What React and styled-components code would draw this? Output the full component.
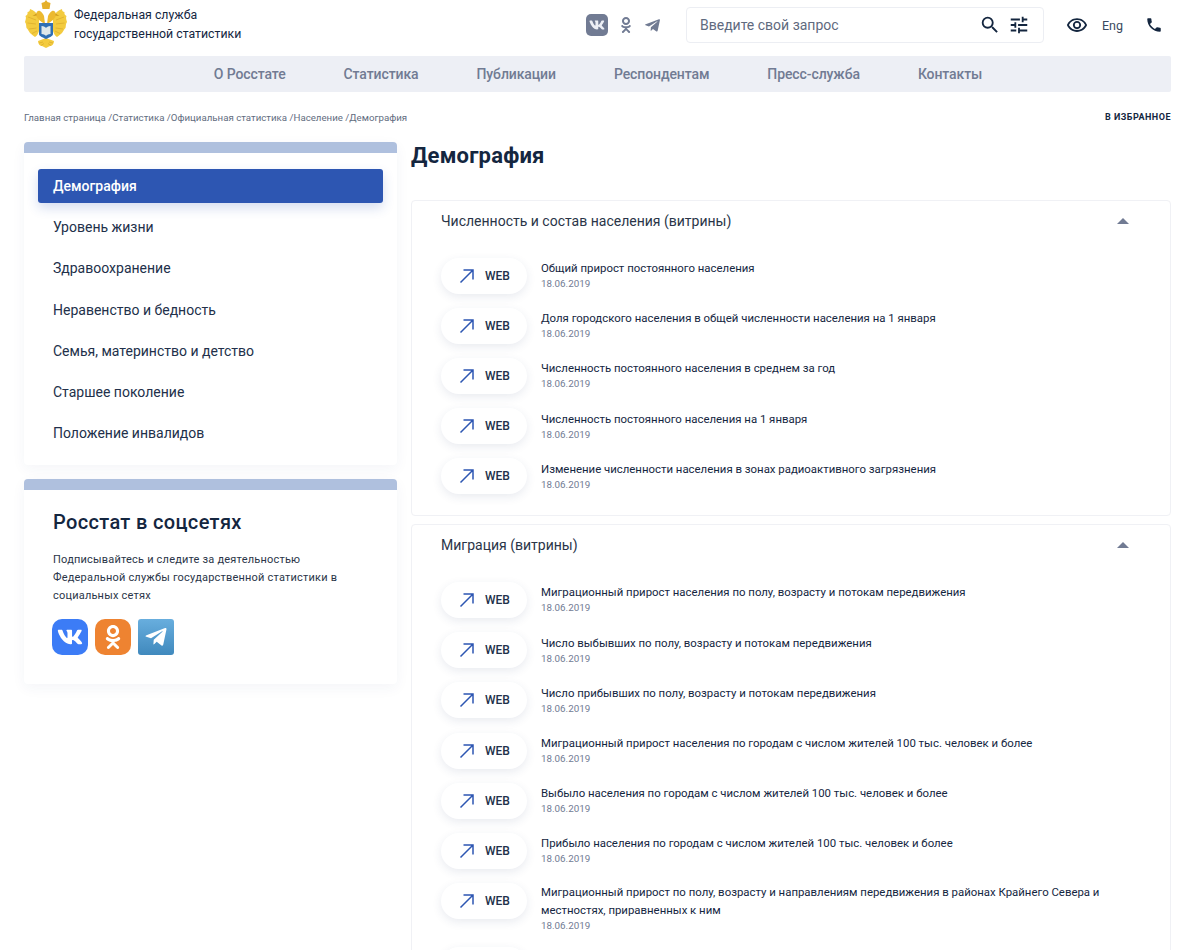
import styled, { createGlobalStyle } from 'styled-components';
import { FaVk, FaOdnoklassniki, FaTelegramPlane } from 'react-icons/fa';
import { MdSearch, MdTune, MdOutlineRemoveRedEye, MdPhone } from 'react-icons/md';

const GlobalStyle = createGlobalStyle`
  html, body {
    margin: 0;
    height: 950px;
    overflow: hidden;
    background: #fff;
  }
  body {
    font-family: Roboto, "Liberation Sans", sans-serif;
    color: #14263f;
  }
  * { box-sizing: border-box; }
`;

const Page = styled.div`
  width: 1200px;
  padding: 0 29px 0 24px;
`;

const Header = styled.header`
  display: flex;
  align-items: center;
  height: 56px;
`;

const Brand = styled.div`
  display: flex;
  align-items: flex-start;
  align-self: flex-start;
  gap: 6px;
  width: 562px;
`;

const BrandText = styled.div`
  margin-top: 5.5px;
  font-size: 12.3px;
  line-height: 19.5px;
  color: #14263f;
`;

const SmallSocials = styled.div`
  display: flex;
  align-items: center;
  gap: 10px;
  width: 100px;
  margin-top: -6px;
  color: #717b93;
`;

const VkBadge = styled.span`
  display: flex;
  align-items: center;
  justify-content: center;
  width: 22px;
  height: 22px;
  border-radius: 5px;
  background: #717b93;
  color: #edeff5;
  font-size: 16px;
`;

const SearchBox = styled.div`
  display: flex;
  align-items: center;
  width: 358px;
  height: 36px;
  margin-top: -6px;
  padding: 0 13px;
  border: 1px solid #eceef3;
  border-radius: 4px;
  color: #14263f;
`;

const SearchText = styled.span`
  flex: 1;
  font-size: 14px;
  color: #5f6a7e;
`;

const TuneIcon = styled(MdTune)`
  margin-left: 7px;
`;

const HeaderTools = styled.div`
  display: flex;
  align-items: center;
  margin-left: 22px;
  margin-top: -6px;
  color: #14263f;
`;

const Lang = styled.span`
  margin: 0 22px 0 14px;
  font-size: 12.5px;
  color: #3a4960;
`;

const Nav = styled.nav`
  display: flex;
  justify-content: center;
  align-items: center;
  gap: 58px;
  height: 36px;
  padding-left: 1px;
  border-radius: 2px;
  background: #edeff5;
`;

const NavLink = styled.a`
  font-size: 14px;
  font-weight: 500;
  letter-spacing: -0.1px;
  color: #717b93;
`;

const Crumbs = styled.div`
  display: flex;
  justify-content: space-between;
  align-items: center;
  height: 14px;
  margin-top: 18px;
  font-size: 9.7px;
  color: #5f6c80;
`;

const Favorite = styled.span`
  font-size: 9px;
  font-weight: 700;
  letter-spacing: 0.5px;
  color: #14263f;
`;

const Columns = styled.div`
  display: grid;
  grid-template-columns: 373px 760px;
  gap: 14px;
  margin-top: 18px;
`;

const Sidebar = styled.aside`
  display: flex;
  flex-direction: column;
  gap: 14px;
`;

const SideCard = styled.section`
  border-top: 11px solid #afc0de;
  border-radius: 4px;
  background: #fff;
  box-shadow: 0 4px 14px rgba(40, 60, 110, 0.05);
`;

const Menu = styled.div`
  padding: 16px 14px 8px;
`;

const MenuItem = styled.div`
  display: flex;
  align-items: center;
  height: 34px;
  margin-bottom: 7.2px;
  padding-left: 15px;
  border-radius: 3px;
  font-size: 14px;
  font-weight: ${(props) => (props.$active ? 500 : 400)};
  color: ${(props) => (props.$active ? '#fff' : '#22304a')};
  background: ${(props) => (props.$active ? '#2d56b2' : 'transparent')};
  box-shadow: ${(props) => (props.$active ? '0 5px 12px rgba(45, 86, 178, 0.2)' : 'none')};
`;

const SocialBody = styled.div`
  padding: 19px 29px 29px;
`;

const SocialTitle = styled.h3`
  margin: 0;
  font-size: 20px;
  line-height: 26px;
  font-weight: 500;
  letter-spacing: 0.35px;
  color: #14263f;
`;

const SocialText = styled.p`
  margin: 16px 0 14px;
  font-size: 11px;
  line-height: 18px;
  letter-spacing: 0.2px;
  color: #2a3548;
`;

const SocialRow = styled.div`
  display: flex;
  gap: 7px;
  margin-left: -1px;
`;

const SocialIcon = styled.span`
  display: flex;
  align-items: center;
  justify-content: center;
  width: 36px;
  height: 36px;
  border-radius: ${(props) => props.$radius || '10px'};
  background: ${(props) => props.$bg};
  color: #fff;
  font-size: ${(props) => props.$size || '24px'};
`;

const Main = styled.main`
  min-width: 0;
`;

const Title = styled.h1`
  margin: 0 0 30px;
  font-size: 22px;
  line-height: 28px;
  font-weight: 700;
  letter-spacing: 0.2px;
  color: #14263f;
`;

const Card = styled.section`
  margin-bottom: 8px;
  padding: 0 29px 7px;
  border: 1px solid #f0f1f5;
  border-radius: 4px;
`;

const CardHead = styled.div`
  display: flex;
  align-items: center;
  justify-content: space-between;
  height: 40px;
  margin-bottom: 16.5px;
  font-size: 14px;
  color: #2a3548;
`;

const Caret = styled.span`
  width: 0;
  height: 0;
  margin-right: 12px;
  border-left: 6px solid transparent;
  border-right: 6px solid transparent;
  border-bottom: 6px solid #717b93;
`;

const Row = styled.div`
  display: flex;
  align-items: flex-start;
  gap: 14px;
  min-height: 50.2px;
`;

const WebPill = styled.span`
  display: flex;
  flex: none;
  align-items: center;
  gap: 10px;
  width: 86px;
  height: 36px;
  padding-left: 18px;
  border-radius: 18px;
  background: #fff;
  box-shadow: 0 3px 10px rgba(40, 60, 110, 0.1);
  font-size: 12px;
  font-weight: 500;
  color: #22304a;
`;

const RowInfo = styled.div`
  margin: ${(props) => (props.$wrapped ? '-0.5px' : '1.5px')} 0 14px;
`;

const RowTitle = styled.div`
  font-size: 11.4px;
  line-height: 18px;
  color: #14263f;
`;

const RowDate = styled.div`
  font-size: 9.8px;
  line-height: 14px;
  color: #717b93;
`;

const Arrow = () => (
  <svg width="16" height="16" viewBox="0 0 16 16" fill="none" stroke="#2d56b2" strokeWidth="1.5">
    <path d="M1.5 14.5 14 2M4.5 2H14v9.5" />
  </svg>
);

const EmblemHalf = () => (
  <g>
    <path
      d="M15 18C13 13 10 10 6 9c0 2-1 3-2.500 3 .5 2-.5 3-2 4 1 2 0 4-.5 6 1.500 2 1 4 1.500 6 1.500 1 2 3 3.500 5 1.500 1 3 3 5 4 2-1 3-3 4-6z"
      fill="#f3cb3f"
    />
    <path d="M12 20 4 17M12 24 3.500 23M12.500 28 5 29M13 31 8 33.500" stroke="#d9a92b" strokeWidth="0.7" fill="none" />
    <path d="M21 24c-4-2-8-5-9-9 0-3 2-5 4-4 2 1 3 3 4 5z" fill="#ecb92f" />
    <path d="M12.500 13.500 8.500 16l4-.5z" fill="#c9951d" />
    <path d="M22 38l-8 3c0 3 2 5 4 5l4 2z" fill="#f3cb3f" />
    <path d="M15 43l4-1M17 45.500l3-2" stroke="#d9a92b" strokeWidth="0.7" fill="none" />
  </g>
);

const Emblem = () => (
  <svg width="44" height="48" viewBox="0 0 44 48">
    <EmblemHalf />
    <g transform="translate(44 0) scale(-1 1)">
      <EmblemHalf />
    </g>
    <path d="M22 0l1.500 2 3 1-1 6h-7l-1-6 3-1z" fill="#e5b02b" />
    <path d="M15 23h14v11c0 2-3.500 3.500-7 5-3.500-1.500-7-3-7-5z" fill="#2f6fb5" />
    <path d="M17.500 26c2.500 0 3.800 1 4.500 2 .7-1 2-2 4.500-2v8c-2.500 0-3.800 1-4.500 2-.7-1-2-2-4.500-2z" fill="#dfe8ea" />
  </svg>
);

const menu = [
  'Уровень жизни',
  'Здравоохранение',
  'Неравенство и бедность',
  'Семья, материнство и детство',
  'Старшее поколение',
  'Положение инвалидов',
];

const navItems = ['О Росстате', 'Статистика', 'Публикации', 'Респондентам', 'Пресс-служба', 'Контакты'];

const population = [
  'Общий прирост постоянного населения',
  'Доля городского населения в общей численности населения на 1 января',
  'Численность постоянного населения в среднем за год',
  'Численность постоянного населения на 1 января',
  'Изменение численности населения в зонах радиоактивного загрязнения',
];

const migration = [
  'Миграционный прирост населения по полу, возрасту и потокам передвижения',
  'Число выбывших по полу, возрасту и потокам передвижения',
  'Число прибывших по полу, возрасту и потокам передвижения',
  'Миграционный прирост населения по городам с числом жителей 100 тыс. человек и более',
  'Выбыло населения по городам с числом жителей 100 тыс. человек и более',
  'Прибыло населения по городам с числом жителей 100 тыс. человек и более',
  'Миграционный прирост по полу, возрасту и направлениям передвижения в районах Крайнего Севера и местностях, приравненных к ним',
];

const DataRow = ({ text }) => (
  <Row>
    <WebPill>
      <Arrow />
      WEB
    </WebPill>
    <RowInfo $wrapped={text.length > 100}>
      <RowTitle>{text}</RowTitle>
      <RowDate>18.06.2019</RowDate>
    </RowInfo>
  </Row>
);

const App = () => (
  <Page>
    <GlobalStyle />
    <Header>
      <Brand>
        <Emblem />
        <BrandText>
          Федеральная служба
          <br />
          государственной статистики
        </BrandText>
      </Brand>
      <SmallSocials>
        <VkBadge>
          <FaVk />
        </VkBadge>
        <FaOdnoklassniki size={16} />
        <FaTelegramPlane size={17} />
      </SmallSocials>
      <SearchBox>
        <SearchText>Введите свой запрос</SearchText>
        <MdSearch size={22} />
        <TuneIcon size={22} />
      </SearchBox>
      <HeaderTools>
        <MdOutlineRemoveRedEye size={22} />
        <Lang>Eng</Lang>
        <MdPhone size={18} />
      </HeaderTools>
    </Header>
    <Nav>
      {navItems.map((item) => (
        <NavLink key={item}>{item}</NavLink>
      ))}
    </Nav>
    <Crumbs>
      <span>Главная страница /Статистика /Официальная статистика /Население /Демография</span>
      <Favorite>В ИЗБРАННОЕ</Favorite>
    </Crumbs>
    <Columns>
      <Sidebar>
        <SideCard>
          <Menu>
            <MenuItem $active>Демография</MenuItem>
            {menu.map((item) => (
              <MenuItem key={item}>{item}</MenuItem>
            ))}
          </Menu>
        </SideCard>
        <SideCard>
          <SocialBody>
            <SocialTitle>Росстат в соцсетях</SocialTitle>
            <SocialText>
              Подписывайтесь и следите за деятельностью
              <br />
              Федеральной службы государственной статистики в
              <br />
              социальных сетях
            </SocialText>
            <SocialRow>
              <SocialIcon $bg="#3c7cf6" $size="26px">
                <FaVk />
              </SocialIcon>
              <SocialIcon $bg="#ee8331">
                <FaOdnoklassniki />
              </SocialIcon>
              <SocialIcon $bg="linear-gradient(#68aede, #4089bd)" $radius="3px">
                <FaTelegramPlane />
              </SocialIcon>
            </SocialRow>
          </SocialBody>
        </SideCard>
      </Sidebar>
      <Main>
        <Title>Демография</Title>
        <Card>
          <CardHead>
            Численность и состав населения (витрины)
            <Caret />
          </CardHead>
          {population.map((item) => (
            <DataRow key={item} text={item} />
          ))}
        </Card>
        <Card>
          <CardHead>
            Миграция (витрины)
            <Caret />
          </CardHead>
          {migration.map((item) => (
            <DataRow key={item} text={item} />
          ))}
          <Row>
            <WebPill />
          </Row>
        </Card>
      </Main>
    </Columns>
  </Page>
);

export default App;
